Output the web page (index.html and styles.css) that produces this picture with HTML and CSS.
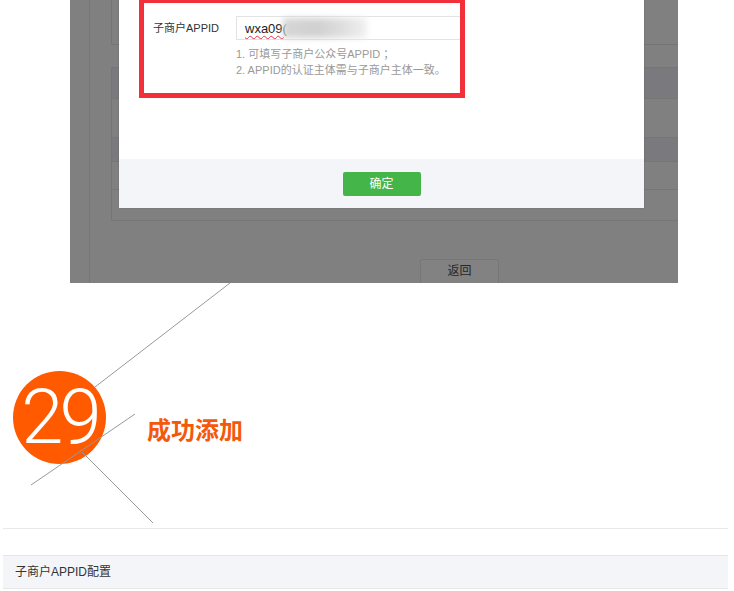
FILE: index.html
```html
<!DOCTYPE html>
<html lang="zh-CN">

<head>
    <meta charset="UTF-8">
    <title>子商户APPID配置</title>
    <link rel="stylesheet" href="styles.css">
</head>

<body>
    <div class="page">
        <div class="shot">
            <div class="shot-side"></div>
            <div class="shot-main">
                <div class="panel-top"></div>
                <div class="panel-table">
                    <div class="row head"></div>
                    <div class="row tall"></div>
                    <div class="row dark"></div>
                    <div class="row mid"></div>
                    <div class="row last"></div>
                </div>
                <div class="panel-actions">
                    <span class="btn-back">返回</span>
                </div>
            </div>

            <div class="modal">
                <div class="modal-body">
                    <div class="highlight">
                        <div class="field">
                            <label class="field-label">子商户APPID</label>
                            <div class="field-input">
                                <span class="typed">wxa09(</span><span class="blur"></span>
                            </div>
                        </div>
                        <ul class="hints">
                            <li>1. 可填写子商户公众号APPID ；</li>
                            <li>2. APPID的认证主体需与子商户主体一致。</li>
                        </ul>
                    </div>
                </div>
                <div class="modal-foot">
                    <span class="btn-ok">确定</span>
                </div>
            </div>
        </div>

        <div class="step">
            <div class="step-num">29</div>
            <h2 class="step-title">成功添加</h2>
            <svg class="step-lines" width="734" height="245" viewBox="0 0 734 245">
                <line x1="230" y1="0" x2="95" y2="104" />
                <line x1="135" y1="131" x2="31" y2="202" />
                <line x1="82" y1="169" x2="153" y2="240" />
            </svg>
        </div>

        <div class="divider"></div>

        <div class="section-bar">子商户APPID配置</div>
    </div>
</body>

</html>
```

FILE: styles.css
```css
* {
    margin: 0;
    padding: 0;
    list-style: none;
    box-sizing: border-box;
}

body {
    background-color: #fff;
    font-family: "Liberation Sans", "Noto Sans CJK SC", sans-serif;
    font-size: 12px;
    color: #333;
}

.page {
    width: 734px;
}

/* grey screenshot of the page behind the dialog */
.shot {
    position: relative;
    display: flex;
    margin-left: 70px;
    width: 608px;
    height: 283px;
    overflow: hidden;
    background-color: #808080;
}

.shot-side {
    width: 20px;
    border-right: 1px solid #757575;
}

.shot-main {
    flex: 1;
    padding-left: 21px;
}

.panel-top {
    height: 45px;
    border-left: 1px solid #757575;
    border-bottom: 1px solid #757575;
}

.panel-table {
    margin-top: 22px;
    border-left: 1px solid #757575;
    border-top: 1px solid #757575;
}

.row {
    border-bottom: 1px solid #767676;
}

.row.head {
    height: 31px;
    background-color: #7a7a7e;
}

.row.tall {
    height: 39px;
}

.row.dark {
    height: 24px;
    background-color: #7a7a7e;
}

.row.mid {
    height: 28px;
}

.row.last {
    height: 31px;
}

.panel-actions {
    padding-top: 38px;
}

.btn-back {
    display: block;
    margin-left: 309px;
    width: 79px;
    height: 25px;
    border: 1px solid #777;
    border-radius: 2px;
    background-color: #828282;
    color: #262626;
    line-height: 23px;
    text-align: center;
}

/* dialog */
.modal {
    position: absolute;
    top: -10px;
    left: 49px;
    width: 525px;
    box-shadow: 0 0 2px rgba(0, 0, 0, 0.15);
}

.modal-body {
    height: 169px;
    padding: 8px 0 0 20px;
    background-color: #fff;
}

.highlight {
    width: 326px;
    height: 100px;
    overflow: hidden;
    border: 5px solid #f2303a;
    padding: 13px 0 0 9px;
    font-size: 11px;
}

.field {
    display: flex;
}

.field-label {
    flex-shrink: 0;
    width: 83px;
    padding-top: 1px;
    line-height: 23px;
    color: #333;
}

.field-input {
    display: flex;
    flex-shrink: 0;
    align-items: center;
    width: 240px;
    height: 24px;
    border: 1px solid #e3e3e3;
    border-right: none;
    padding-left: 8px;
    font-size: 13px;
    color: #222;
}

.typed {
    text-decoration: underline wavy #e0304a;
    text-decoration-thickness: 1px;
    text-underline-offset: 2px;
}

.blur {
    display: inline-block;
    margin-left: -4px;
    width: 84px;
    height: 20px;
    background: linear-gradient(90deg, #d6d6d6, #d0d0d0 40%, #dedede 70%, #f0f0f0);
    filter: blur(3px);
}

.hints {
    margin: 6px 0 0 83px;
    white-space: nowrap;
    line-height: 16px;
    color: #999;
}

.modal-foot {
    display: flex;
    justify-content: center;
    height: 49px;
    padding-top: 13px;
    background-color: #f4f5f9;
}

.btn-ok {
    width: 78px;
    height: 24px;
    border-radius: 2px;
    background-color: #44b549;
    color: #fff;
    line-height: 24px;
    text-align: center;
}

/* step heading */
.step {
    position: relative;
    display: flex;
    align-items: flex-start;
    height: 245px;
    padding: 88px 0 0 13px;
}

.step-num {
    width: 93px;
    height: 93px;
    border-radius: 50%;
    background-color: #ff5a00;
    color: #fff;
    font-family: "Roboto", "Open Sans", "Lato", sans-serif;
    font-weight: 300;
    font-size: 76px;
    line-height: 93px;
    letter-spacing: -4px;
    text-align: center;
}

.step-title {
    margin: 43px 0 0 41px;
    font-family: "Noto Sans CJK SC", sans-serif;
    font-size: 24px;
    font-weight: 700;
    line-height: 30px;
    color: #f4580a;
}

.step-lines {
    position: absolute;
    top: 0;
    left: 0;
    pointer-events: none;
}

.step-lines line {
    stroke: #999;
    stroke-width: 1;
}

.divider {
    margin: 0 6px 26px 3px;
    border-top: 1px solid #e8e8e8;
}

.section-bar {
    margin-left: 3px;
    width: 725px;
    height: 34px;
    border-top: 1px solid #e6e6e6;
    border-bottom: 1px solid #e6e6e6;
    padding-left: 12px;
    background-color: #f4f5f8;
    line-height: 32px;
    color: #333;
}
```
